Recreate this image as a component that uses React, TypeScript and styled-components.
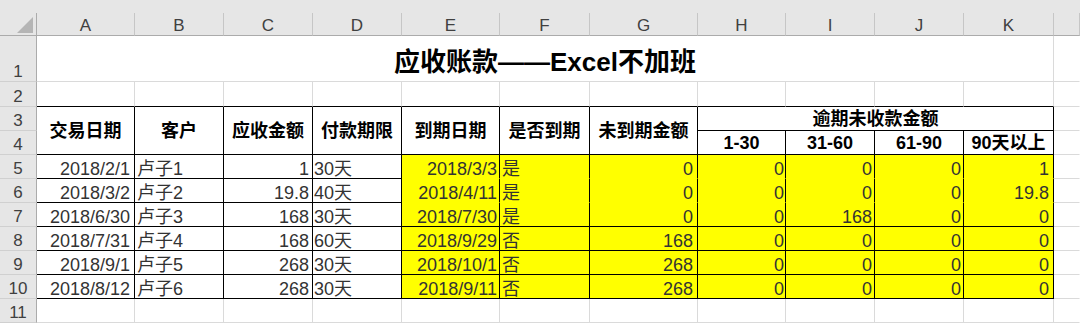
import React from "react";
import styled, { createGlobalStyle } from "styled-components";

/**
 * Excel sheet: 应收账款 aging table
 */

const GRID = "#dadada";
const BLACK = "#000";
const YELLOW = "#ffff00";
const HEAD_BG = "#e6e6e6";

const COLS = ["A", "B", "C", "D", "E", "F", "G", "H", "I", "J", "K"];
const WIDTHS = [98, 89, 89, 89, 98, 90, 108, 88, 89, 89, 90];

const GlobalStyle = createGlobalStyle`
  html, body {
    margin: 0;
    padding: 0;
    background: #fff;
  }
  body {
    font-family: "Liberation Sans", "Noto Sans CJK SC", sans-serif;
  }
`;

const Sheet = styled.div`
  display: grid;
  grid-template-columns: 37px ${WIDTHS.map((w) => `${w}px`).join(" ")} 1fr;
  grid-template-rows: 13px 23px 46px 25px repeat(9, 24px);
  width: 1080px;
  height: 323px;
  overflow: hidden;
  background: #fff;
`;

const TopStrip = styled.div`
  grid-column: 1 / -1;
  background: ${HEAD_BG};
`;

const Corner = styled.div`
  display: flex;
  align-items: flex-start;
  padding: 4px 0 0 17px;
  background: ${HEAD_BG};
  border-right: 1px solid #ababab;
  border-bottom: 1px solid #ababab;
`;

const ColHead = styled.div`
  display: flex;
  align-items: flex-end;
  justify-content: center;
  background: ${HEAD_BG};
  border-right: 1px solid #c6c6c6;
  border-bottom: 1px solid #ababab;
  font-size: 17px;
  line-height: 18px;
  color: #404040;
`;

const RowHead = styled.div`
  display: flex;
  align-items: flex-end;
  justify-content: center;
  background: ${HEAD_BG};
  border-right: 1px solid #ababab;
  border-bottom: 1px solid #d0d0d0;
  font-size: 17px;
  line-height: 18px;
  color: #404040;
`;

type Align = "left" | "right" | "center";

interface CellProps {
  $span?: number;
  $rows?: number;
  $align?: Align;
  $middle?: boolean;
  $bold?: boolean;
  $fill?: string;
  $bb?: string;
  $br?: string;
  $pl?: number;
  $pr?: number;
}

const justify = (a?: Align) =>
  a === "right" ? "flex-end" : a === "center" ? "center" : "flex-start";

const Cell = styled.div<CellProps>`
  grid-column: span ${(p) => p.$span ?? 1};
  grid-row: span ${(p) => p.$rows ?? 1};
  display: flex;
  align-items: ${(p) => (p.$middle ? "center" : "flex-end")};
  justify-content: ${(p) => justify(p.$align)};
  padding: 0 ${(p) => p.$pr ?? 2}px 0 ${(p) => p.$pl ?? 2}px;
  background: ${(p) => p.$fill ?? "#fff"};
  border-right: 1px solid ${(p) => p.$br ?? GRID};
  border-bottom: 1px solid ${(p) => p.$bb ?? GRID};
  font-size: 18px;
  line-height: 18px;
  font-weight: ${(p) => (p.$bold ? 700 : 400)};
  color: ${(p) => (p.$bold ? "#000" : "#333")};
  white-space: nowrap;
  overflow: hidden;
`;

const Title = styled(Cell)`
  font-size: 26px;
  line-height: 26px;
  padding-bottom: 6px;
`;

const colFmt: { align: Align; pl?: number; pr?: number }[] = [
  { align: "right", pr: 4 },
  { align: "left", pl: 2 },
  { align: "right", pr: 3 },
  { align: "left", pl: 1 },
  { align: "right", pr: 2 },
  { align: "left", pl: 2 },
  { align: "right", pr: 4 },
  { align: "right", pr: 1 },
  { align: "right", pr: 2 },
  { align: "right", pr: 2 },
  { align: "right", pr: 4 },
];

const headers = ["交易日期", "客户", "应收金额", "付款期限", "到期日期", "是否到期", "未到期金额"];
const agingHeads = ["1-30", "31-60", "61-90", "90天以上"];

const rows: string[][] = [
  ["2018/2/1", "卢子1", "1", "30天", "2018/3/3", "是", "0", "0", "0", "0", "1"],
  ["2018/3/2", "卢子2", "19.8", "40天", "2018/4/11", "是", "0", "0", "0", "0", "19.8"],
  ["2018/6/30", "卢子3", "168", "30天", "2018/7/30", "是", "0", "0", "168", "0", "0"],
  ["2018/7/31", "卢子4", "168", "60天", "2018/9/29", "否", "168", "0", "0", "0", "0"],
  ["2018/9/1", "卢子5", "268", "30天", "2018/10/1", "否", "268", "0", "0", "0", "0"],
  ["2018/8/12", "卢子6", "268", "30天", "2018/9/11", "否", "268", "0", "0", "0", "0"],
];

const CornerMark = () => (
  <svg width="16" height="16" viewBox="0 0 16 16">
    <polygon points="16,0 16,16 0,16" fill="#b5b5b5" />
  </svg>
);

export default function App() {
  return (
    <>
      <GlobalStyle />
      <Sheet>
        <TopStrip />
        <Corner>
          <CornerMark />
        </Corner>
        {COLS.map((c) => (
          <ColHead key={c}>{c}</ColHead>
        ))}
        <ColHead />

        {/* row 1: title */}
        <RowHead>1</RowHead>
        <Title $span={11} $align="center" $bold>
          应收账款——Excel不加班
        </Title>
        <Cell $br="transparent" />

        {/* row 2: empty, top border of the table */}
        <RowHead>2</RowHead>
        {COLS.map((c) => (
          <Cell key={c} $bb={BLACK} />
        ))}
        <Cell $br="transparent" />

        {/* rows 3-4: headers */}
        <RowHead>3</RowHead>
        {headers.map((h) => (
          <Cell key={h} $rows={2} $middle $align="center" $bold $bb={BLACK} $br={BLACK}>
            {h}
          </Cell>
        ))}
        <Cell $span={4} $middle $align="center" $bold $bb={BLACK} $br={BLACK}>
          逾期未收款金额
        </Cell>
        <Cell $br="transparent" />

        <RowHead>4</RowHead>
        {agingHeads.map((h) => (
          <Cell key={h} $middle $align="center" $bold $bb={BLACK} $br={BLACK}>
            {h}
          </Cell>
        ))}
        <Cell $br="transparent" />

        {/* rows 5-10: data */}
        {rows.map((r, ri) => (
          <React.Fragment key={ri}>
            <RowHead>{ri + 5}</RowHead>
            {r.map((v, ci) => {
              const yellow = ci >= 4;
              const openBottom = yellow && ri < 2;
              return (
                <Cell
                  key={ci}
                  $align={colFmt[ci].align}
                  $pl={colFmt[ci].pl}
                  $pr={colFmt[ci].pr}
                  $fill={yellow ? YELLOW : undefined}
                  $br={BLACK}
                  $bb={openBottom ? YELLOW : BLACK}
                >
                  {v}
                </Cell>
              );
            })}
            <Cell $br="transparent" />
          </React.Fragment>
        ))}

        {/* row 11 */}
        <RowHead>11</RowHead>
        {COLS.map((c) => (
          <Cell key={c} />
        ))}
        <Cell $br="transparent" />
      </Sheet>
    </>
  );
}
